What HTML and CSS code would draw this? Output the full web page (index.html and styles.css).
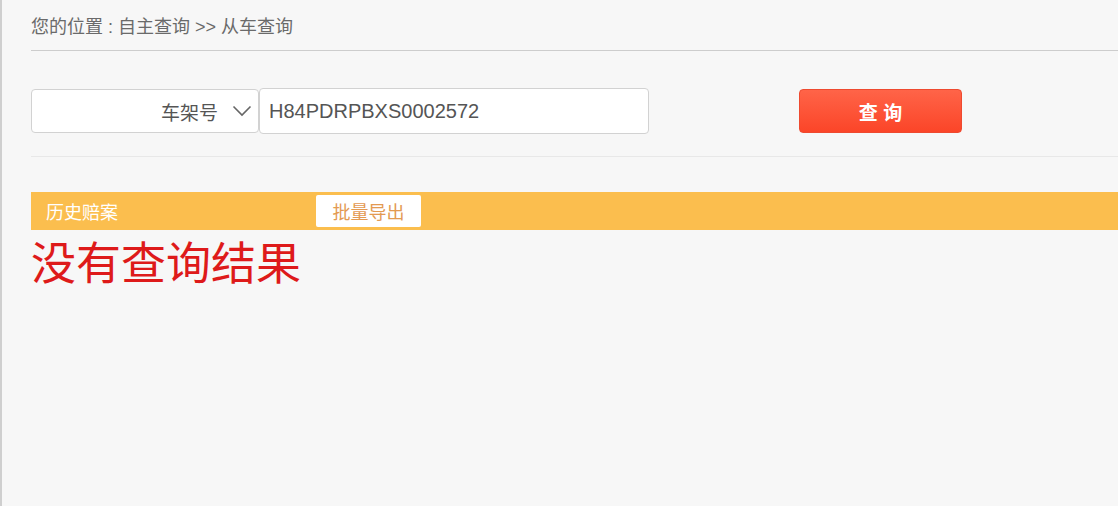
FILE: index.html
```html
<!DOCTYPE html>
<html lang="zh-CN">
<head>
<meta charset="utf-8">
<title>从车查询</title>
<link rel="stylesheet" href="styles.css">
</head>
<body>
<div class="page">
  <div class="crumb">您的位置 : 自主查询 &gt;&gt; 从车查询</div>
  <div class="search">
    <div class="select">
      <span class="select-text">车架号</span>
      <svg class="chevron" width="20" height="12" viewBox="0 0 20 12"><path d="M1.5 1.5 L10 10 L18.5 1.5" fill="none" stroke="#666" stroke-width="1.6"/></svg>
    </div>
    <div class="input">H84PDRPBXS0002572</div>
    <button class="btn-query">查 询</button>
  </div>
  <div class="sep"></div>
  <div class="bar">
    <span class="bar-title">历史赔案</span>
    <span class="btn-export">批量导出</span>
  </div>
  <div class="empty">没有查询结果</div>
</div>
</body>
</html>
```
FILE: styles.css
```css
html, body {
  margin: 0;
  padding: 0;
  height: 100%;
}
body {
  background: #f7f7f7;
  font-family: "Liberation Sans", "Noto Sans CJK SC", sans-serif;
  color: #666;
}
.page {
  min-height: 100%;
  box-sizing: border-box;
  border-left: 2px solid #cfcfcf;
  padding-left: 29px;
}
.crumb {
  height: 51px;
  box-sizing: border-box;
  padding-top: 16px;
  font-size: 18px;
  line-height: 22px;
  color: #6a6a6a;
  border-bottom: 1px solid #cdcdcd;
}
.search {
  display: flex;
  align-items: center;
  margin-top: 37px;
  height: 46px;
}
.select {
  width: 228px;
  height: 44px;
  box-sizing: border-box;
  background: #fff;
  border: 1px solid #d2d2d2;
  border-radius: 4px;
  display: flex;
  align-items: center;
  justify-content: flex-end;
  padding-right: 6px;
  gap: 14px;
}
.select-text {
  font-size: 19px;
  color: #555;
}
.chevron {
  display: block;
}
.input {
  width: 390px;
  height: 46px;
  box-sizing: border-box;
  background: #fff;
  border: 1px solid #d2d2d2;
  border-radius: 4px;
  padding-left: 9px;
  display: flex;
  align-items: center;
  font-size: 20px;
  color: #555;
}
.btn-query {
  margin-left: 150px;
  width: 163px;
  height: 44px;
  border: 1px solid #ee4a30;
  border-radius: 4px;
  background: linear-gradient(#ff6448, #fb4528);
  color: #fff;
  font-family: "Liberation Sans", "Noto Sans CJK SC", sans-serif;
  font-size: 19px;
  font-weight: bold;
  padding: 0;
}
.sep {
  margin-top: 22px;
  border-top: 1px solid #e8e8e8;
}
.bar {
  margin-top: 35px;
  height: 38px;
  background: #fbbe4e;
  display: flex;
  align-items: center;
  padding-left: 15px;
}
.bar-title {
  width: 270px;
  font-size: 18px;
  color: #fff;
}
.btn-export {
  width: 105px;
  height: 32px;
  background: #fff;
  border-radius: 2px;
  display: flex;
  align-items: center;
  justify-content: center;
  font-size: 18px;
  color: #e39a52;
}
.empty {
  margin-top: 2px;
  font-family: "Noto Sans CJK SC", sans-serif;
  font-size: 45px;
  line-height: 58px;
  color: #de1a1a;
}
```
